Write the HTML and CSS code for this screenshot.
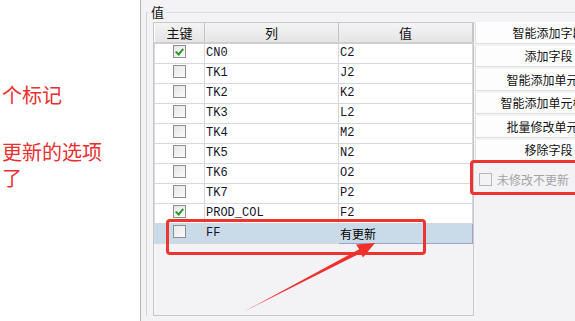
FILE: index.html
```html
<!DOCTYPE html>
<html lang="zh">
<head>
    <meta charset="UTF-8">
    <meta name="viewport" content="width=device-width, initial-scale=1.0">
    <title>值</title>
    <link rel="stylesheet" href="styles.css">
</head>
<body>
    <div class="note">
        <p class="note-line first">个标记</p>
        <p class="note-line">更新的选项</p>
        <p class="note-line">了</p>
    </div>

    <div class="panel">
        <div class="group">
            <span class="legend">值</span>
            <div class="group-body">
                <div class="grid">
                    <table class="fields">
                        <thead>
                            <tr>
                                <th class="col-key">主键</th>
                                <th class="col-name">列</th>
                                <th class="col-val">值</th>
                            </tr>
                        </thead>
                        <tbody>
                            <tr><td><span class="box checked"></span></td><td>CN0</td><td>C2</td></tr>
                            <tr><td><span class="box"></span></td><td>TK1</td><td>J2</td></tr>
                            <tr><td><span class="box"></span></td><td>TK2</td><td>K2</td></tr>
                            <tr><td><span class="box"></span></td><td>TK3</td><td>L2</td></tr>
                            <tr><td><span class="box"></span></td><td>TK4</td><td>M2</td></tr>
                            <tr><td><span class="box"></span></td><td>TK5</td><td>N2</td></tr>
                            <tr><td><span class="box"></span></td><td>TK6</td><td>O2</td></tr>
                            <tr><td><span class="box"></span></td><td>TK7</td><td>P2</td></tr>
                            <tr><td><span class="box checked"></span></td><td>PROD_COL</td><td>F2</td></tr>
                            <tr class="selected"><td><span class="box"></span></td><td>FF</td><td class="editing">有更新</td></tr>
                        </tbody>
                    </table>
                </div>
                <div class="actions">
                    <button class="btn">智能添加字段</button>
                    <button class="btn">添加字段</button>
                    <button class="btn">智能添加单元格</button>
                    <button class="btn">智能添加单元格值</button>
                    <button class="btn">批量修改单元格</button>
                    <button class="btn">移除字段</button>
                    <label class="option"><span class="box disabled"></span>未修改不更新</label>
                </div>
            </div>
        </div>
    </div>

    <!-- 标注 -->
    <div class="mark mark-row"></div>
    <div class="mark mark-option"></div>
    <svg class="arrow" width="575" height="321" viewBox="0 0 575 321">
        <polygon points="245,311 359.2,249.3 356,244.5 375,243 363,257.5 360.6,253.1" fill="#f0302c"/>
    </svg>
</body>
</html>
```

FILE: styles.css
```css
body {
    margin: 0;
    padding: 0;
    display: flex;
    width: 575px;
    height: 321px;
    overflow: hidden;
    background-color: #fff;
    font-family: "Noto Sans CJK SC", sans-serif;
    font-size: 12px;
    color: #111;
}
.note {
    width: 138px;
    flex: none;
    padding: 82px 0 0 2px;
    color: #e8302f;
    font-size: 20px;
    line-height: 26px;
}
.note-line {
    margin: 0;
    height: 26px;
    white-space: nowrap;
}
.note-line.first {
    margin-bottom: 31px;
}
.panel {
    flex: 1;
    background-color: #f3f3f5;
    border-left: 1px solid #b4b4b4;
    padding-left: 5px;
}
.group {
    position: relative;
    margin-top: 12px;
    border-top: 1px solid #dcdcdc;
    border-left: 1px solid #d4d4d4;
    padding: 9px 0 0 6px;
}
.legend {
    position: absolute;
    top: -10px;
    left: 2px;
    padding: 0 2px;
    background-color: #f3f3f5;
    font-size: 13px;
    line-height: 18px;
}
.group-body {
    display: flex;
}
.grid {
    width: 319px;
    height: 292px;
    flex: none;
    border: 1px solid #c8c8c8;
    background-color: #f3f3f5;
}
.fields {
    border-collapse: collapse;
    table-layout: fixed;
    width: 319px;
}
.fields th {
    height: 19px;
    font-weight: normal;
    font-size: 13px;
    background: linear-gradient(#f4f4f4, #e4e4e4);
    border-left: 1px solid #fff;
    border-right: 1px solid #c4c4c4;
    border-bottom: 2px solid #cfcfcf;
    padding: 0;
    line-height: 19px;
}
.col-key { width: 49px; }
.col-name { width: 133px; }
.fields td {
    height: 19px;
    padding: 0 0 0 1px;
    background-color: #fff;
    border: 1px solid #d8d8d8;
    font-family: "Liberation Mono", monospace;
    font-size: 12px;
    color: #14142a;
    line-height: 19px;
}
.fields td:first-child {
    text-align: center;
    padding: 0;
}
.fields tr:first-child td {
    border-top: none;
}
.fields .selected td {
    background-color: #c9dbe9;
}
.fields td.editing {
    border: 1px solid #9ea4c6;
    font-family: "Noto Sans CJK SC", sans-serif;
    color: #000;
}
.box {
    display: inline-block;
    width: 11px;
    height: 11px;
    border: 1px solid #8e8e8e;
    background: linear-gradient(135deg, #e6e6e6, #fbfbfb);
    vertical-align: middle;
    position: relative;
    top: -1px;
}
.box.checked::after {
    content: "";
    position: absolute;
    left: 3px;
    top: 1px;
    width: 3px;
    height: 6px;
    border: solid #2e9a2e;
    border-width: 0 2px 2px 0;
    transform: rotate(40deg);
}
.box.disabled {
    border-color: #b8b8b8;
    background: #f3f3f5;
    margin-right: 5px;
}
.actions {
    display: flex;
    flex-direction: column;
    gap: 2px;
    margin-left: 1px;
    width: 146px;
    flex: none;
}
.btn {
    height: 21.5px;
    padding: 0;
    border: none;
    border-left: 1px solid #e2e2e2;
    border-bottom: 1px solid #dedede;
    background-color: #fdfdfd;
    font-family: "Noto Sans CJK SC", sans-serif;
    font-size: 12px;
    color: #111;
    text-align: center;
    white-space: nowrap;
}
.option {
    display: flex;
    align-items: center;
    margin: 8px 0 0 4px;
    color: #a4a4a4;
    font-size: 12px;
    line-height: 18px;
}
.mark {
    position: absolute;
    border: 3px solid #ee3430;
    border-radius: 4px;
    box-sizing: border-box;
}
.mark-row {
    left: 166px;
    top: 219px;
    width: 260px;
    height: 36px;
}
.mark-option {
    left: 470px;
    top: 160px;
    width: 130px;
    height: 35px;
}
.arrow {
    position: absolute;
    left: 0;
    top: 0;
    pointer-events: none;
}
```
